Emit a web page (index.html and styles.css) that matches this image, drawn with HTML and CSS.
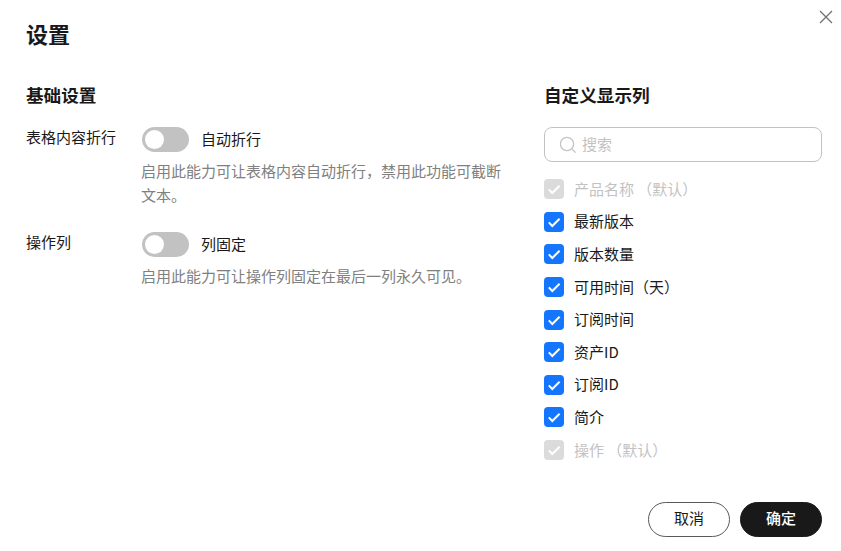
FILE: index.html
```html
<!DOCTYPE html>
<html lang="zh-CN">
<head>
  <meta charset="UTF-8" />
  <title>设置</title>
  <link rel="stylesheet" href="styles.css">
</head>
<body>
  <div class="dialog">
    <svg class="close" viewBox="0 0 14 14" width="14" height="14"><path d="M1 1l12 12M13 1L1 13" stroke="#707070" stroke-width="1.3" fill="none"/></svg>
    <h1 class="title">设置</h1>

    <div class="columns">
      <div class="basic">
        <h2 class="section-title">基础设置</h2>

        <div class="row row-wrap">
          <div class="row-label">表格内容折行</div>
          <div class="row-body">
            <div class="switch-line">
              <span class="switch"><span class="knob"></span></span>
              <span class="switch-text">自动折行</span>
            </div>
            <p class="hint">启用此能力可让表格内容自动折行，禁用此功能可截断文本。</p>
          </div>
        </div>

        <div class="row">
          <div class="row-label">操作列</div>
          <div class="row-body">
            <div class="switch-line">
              <span class="switch"><span class="knob"></span></span>
              <span class="switch-text">列固定</span>
            </div>
            <p class="hint">启用此能力可让操作列固定在最后一列永久可见。</p>
          </div>
        </div>
      </div>

      <div class="custom">
        <h2 class="section-title">自定义显示列</h2>
        <div class="search">
          <svg viewBox="0 0 18 18" width="18" height="18"><circle cx="8" cy="8" r="6.6" stroke="#c4c4c4" stroke-width="1.3" fill="none"/><path d="M13 13l3.6 3.6" stroke="#c4c4c4" stroke-width="1.3" fill="none"/></svg>
          <span class="placeholder">搜索</span>
        </div>
        <ul class="checks">
          <li class="check disabled"><span class="box"><svg viewBox="0 0 20 20" width="20" height="20"><path d="M4.8 10.4L8.3 14l7.3-7.2" /></svg></span><span class="check-text">产品名称 （默认）</span></li>
          <li class="check"><span class="box"><svg viewBox="0 0 20 20" width="20" height="20"><path d="M4.8 10.4L8.3 14l7.3-7.2" /></svg></span><span class="check-text">最新版本</span></li>
          <li class="check"><span class="box"><svg viewBox="0 0 20 20" width="20" height="20"><path d="M4.8 10.4L8.3 14l7.3-7.2" /></svg></span><span class="check-text">版本数量</span></li>
          <li class="check"><span class="box"><svg viewBox="0 0 20 20" width="20" height="20"><path d="M4.8 10.4L8.3 14l7.3-7.2" /></svg></span><span class="check-text">可用时间（天）</span></li>
          <li class="check"><span class="box"><svg viewBox="0 0 20 20" width="20" height="20"><path d="M4.8 10.4L8.3 14l7.3-7.2" /></svg></span><span class="check-text">订阅时间</span></li>
          <li class="check"><span class="box"><svg viewBox="0 0 20 20" width="20" height="20"><path d="M4.8 10.4L8.3 14l7.3-7.2" /></svg></span><span class="check-text">资产ID</span></li>
          <li class="check"><span class="box"><svg viewBox="0 0 20 20" width="20" height="20"><path d="M4.8 10.4L8.3 14l7.3-7.2" /></svg></span><span class="check-text">订阅ID</span></li>
          <li class="check"><span class="box"><svg viewBox="0 0 20 20" width="20" height="20"><path d="M4.8 10.4L8.3 14l7.3-7.2" /></svg></span><span class="check-text">简介</span></li>
          <li class="check disabled"><span class="box"><svg viewBox="0 0 20 20" width="20" height="20"><path d="M4.8 10.4L8.3 14l7.3-7.2" /></svg></span><span class="check-text">操作 （默认）</span></li>
        </ul>
      </div>
    </div>

    <div class="footer">
      <button class="btn">取消</button>
      <button class="btn primary">确定</button>
    </div>
  </div>
</body>
</html>
```

FILE: styles.css
```css
html, body {
  margin: 0;
  background: #fff;
}
body {
  font-family: "Noto Sans CJK SC", "Liberation Sans", sans-serif;
  font-size: 15px;
  color: #191919;
}
.dialog {
  position: relative;
  width: 841px;
  height: 551px;
  box-sizing: border-box;
  padding: 17px 19px 14px 26px;
  overflow: hidden;
}
.close {
  position: absolute;
  top: 10px;
  right: 8px;
}
.title {
  margin: 0;
  font-size: 22px;
  line-height: 32px;
  font-weight: 700;
}
.columns {
  display: flex;
  margin-top: 33px;
}
.basic {
  width: 519px;
}
.custom {
  width: 278px;
}
.section-title {
  margin: 0;
  font-size: 17.6px;
  line-height: 26px;
  font-weight: 700;
}
.row {
  display: flex;
  margin-top: 24px;
}
.row-wrap {
  margin-top: 18px;
}
.row-label {
  width: 116px;
  line-height: 22px;
  flex: none;
}
.row-body {
  flex: 1;
}
.switch-line {
  display: flex;
  align-items: center;
  height: 26px;
}
.switch {
  display: block;
  width: 47px;
  height: 25px;
  border-radius: 13px;
  background: #c2c2c2;
  position: relative;
}
.knob {
  position: absolute;
  left: 3px;
  top: 3px;
  width: 19px;
  height: 19px;
  border-radius: 50%;
  background: #fff;
}
.switch-text {
  margin: 0 0 2px 12px;
}
.hint {
  margin: 7px 0 0 -1px;
  width: 370px;
  color: #808080;
  line-height: 24px;
}
.search {
  display: flex;
  align-items: center;
  box-sizing: border-box;
  width: 278px;
  height: 35px;
  margin-top: 19px;
  padding-left: 14px;
  border: 1px solid #c2c2c2;
  border-radius: 8px;
}
.placeholder {
  margin: 0 0 2px 5px;
  color: #c2c2c2;
}
.checks {
  list-style: none;
  margin: 11px 0 0;
  padding: 0;
}
.check {
  display: flex;
  align-items: center;
  height: 32.6px;
}
.check-text {
  margin-bottom: 2px;
}
.box {
  display: block;
  width: 20px;
  height: 20px;
  margin-right: 10px;
  border-radius: 4px;
  background: #1476ff;
}
.box svg {
  display: block;
}
.box path {
  fill: none;
  stroke: #fff;
  stroke-width: 2;
}
.check.disabled {
  color: #c2c2c2;
}
.check.disabled .box {
  background: #dbdbdb;
}
.footer {
  position: absolute;
  right: 19px;
  bottom: 14px;
  display: flex;
  gap: 10px;
}
.btn {
  width: 82px;
  height: 35px;
  padding: 0 0 5px;
  border: 1px solid #595959;
  border-radius: 18px;
  background: #fff;
  color: #191919;
  font: inherit;
}
.btn.primary {
  border-color: #191919;
  background: #191919;
  color: #fff;
  font-weight: 500;
}
```
